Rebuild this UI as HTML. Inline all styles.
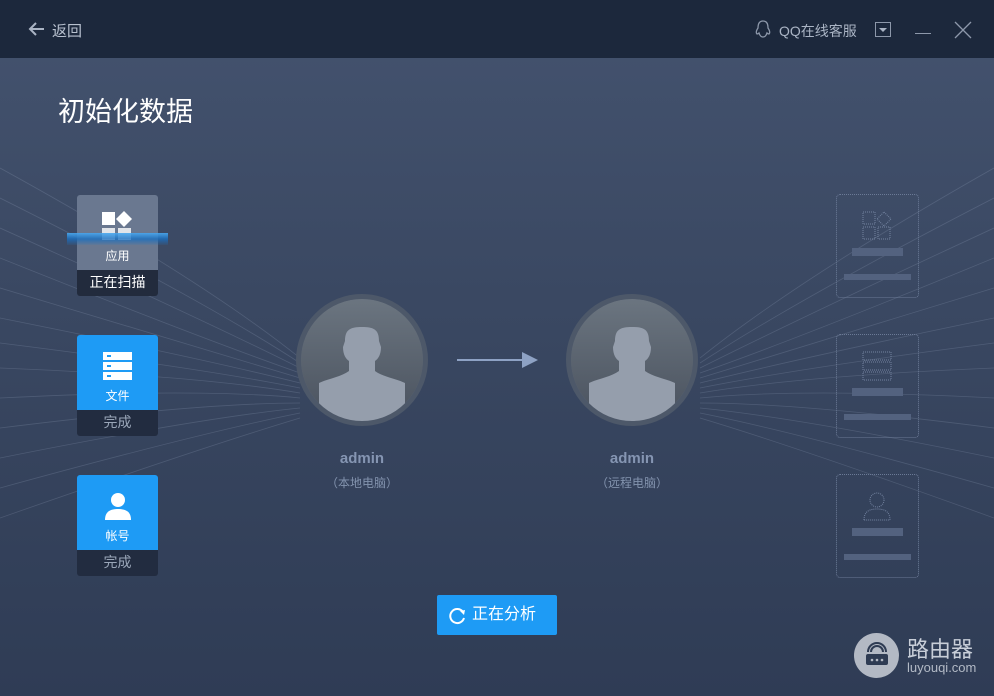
<!DOCTYPE html>
<html><head><meta charset="utf-8"><style>
*{margin:0;padding:0;box-sizing:border-box}
body{width:994px;height:696px;overflow:hidden;font-family:"Liberation Sans","Noto Sans CJK SC",sans-serif;position:relative;background:linear-gradient(#44536f 0,#3a4862 300px,#2f3c55 696px)}
.hdr{position:absolute;left:0;top:0;width:994px;height:58px;background:#1c283c}
.a{position:absolute}
.card{position:absolute;left:77px;width:81px;height:101px;border-radius:3px;overflow:hidden}
.card .top{height:75px;background:#1e9bf5;position:relative}
.card .bot{height:26px;background:#222c40;color:#9aa6b8;font-size:14px;text-align:center;line-height:24px}
.card .lbl{position:absolute;left:0;right:0;top:52px;text-align:center;color:#fff;font-size:12px}
.dc{position:absolute;left:836px;width:83px;height:104px;border:1px dotted #6b7a96;border-radius:4px}
.dc .b1{position:absolute;left:15px;top:53px;width:51px;height:8px;background:#53627f}
.dc .b2{position:absolute;left:7px;top:79px;width:67px;height:6px;background:#53627f}
.av{position:absolute;width:132px;height:132px;border-radius:50%;background:#5b6574;border:5px solid #4d5869;overflow:hidden}
.av .in{position:absolute;inset:0;border-radius:50%;background:linear-gradient(#6b7580,#4a525e)}
.nm{position:absolute;width:130px;text-align:center;color:#8595b2;font-size:15px;font-weight:bold}
.sb{position:absolute;width:130px;text-align:center;color:#8393ae;font-size:12px}
</style></head><body>
<svg class="a" style="left:0;top:58px" width="994" height="638">
<g stroke="#a8b6cf" stroke-width="0.8" opacity="0.2" fill="none">
<path d="M0 110 Q200 220 300 300"/><path d="M0 140 Q200 240 300 305"/><path d="M0 170 Q200 260 300 310"/><path d="M0 200 Q200 280 300 315"/><path d="M0 230 Q200 290 300 320"/><path d="M0 260 Q200 300 300 325"/><path d="M0 285 Q200 310 300 330"/><path d="M0 310 Q200 318 300 335"/><path d="M0 340 Q200 330 300 340"/><path d="M0 370 Q200 345 300 345"/><path d="M0 400 Q200 360 300 350"/><path d="M0 430 Q200 375 300 355"/><path d="M0 460 Q200 390 300 360"/>
<path d="M994 110 Q800 220 700 300"/><path d="M994 140 Q800 240 700 305"/><path d="M994 170 Q800 260 700 310"/><path d="M994 200 Q800 280 700 315"/><path d="M994 230 Q800 290 700 320"/><path d="M994 260 Q800 300 700 325"/><path d="M994 285 Q800 310 700 330"/><path d="M994 310 Q800 318 700 335"/><path d="M994 340 Q800 330 700 340"/><path d="M994 370 Q800 345 700 345"/><path d="M994 400 Q800 360 700 350"/><path d="M994 430 Q800 375 700 355"/><path d="M994 460 Q800 390 700 360"/>
</g></svg>
<div class="hdr"></div>
<svg class="a" style="left:28px;top:21px" width="18" height="16"><path d="M8 2 L2 8 L8 14 M2 8 H16" stroke="#aab4c4" stroke-width="2" fill="none"/></svg>
<div class="a" style="left:52px;top:20px;color:#b8c1cf;font-size:15px">返回</div>
<svg class="a" style="left:753px;top:19px" width="20" height="20"><path d="M10 2 C5 2 5 7 5 9 C3 12 3 14 4 15 C5 15 6 14 6 14 C7 17 8 18 10 18 C12 18 13 17 14 14 C14 14 15 15 16 15 C17 14 17 12 15 9 C15 7 15 2 10 2Z" stroke="#8d98aa" stroke-width="1.3" fill="none"/></svg>
<div class="a" style="left:779px;top:21px;color:#aab4c4;font-size:14px">QQ在线客服</div>
<div class="a" style="left:875px;top:22px;width:16px;height:15px;border:1px solid #8d98aa"></div>
<div class="a" style="left:879px;top:28px;width:0;height:0;border-left:4px solid transparent;border-right:4px solid transparent;border-top:4px solid #aab4c4"></div>
<div class="a" style="left:915px;top:33px;width:16px;height:1px;background:#8d98aa"></div>
<svg class="a" style="left:954px;top:21px" width="18" height="18"><path d="M1 1 L17 17 M17 1 L1 17" stroke="#8d98aa" stroke-width="1.3"/></svg>
<div class="a" style="left:58px;top:90px;color:#fff;font-size:27px">初始化数据</div>

<div class="card" style="top:195px"><div class="top" style="background:#6a7890">
<svg class="a" style="left:24px;top:16px" width="32" height="30"><rect x="1" y="1" width="13" height="13" fill="#fff"/><path d="M23 0 L31 8 L23 16 L15 8Z" fill="#fff"/><rect x="1" y="17" width="13" height="12" fill="#fff" opacity=".8"/><rect x="17" y="17" width="13" height="12" fill="#fff" opacity=".8"/></svg>
<div class="lbl">应用</div></div><div class="bot" style="color:#fff;background:#222b3d">正在扫描</div></div>
<div class="a" style="left:67px;top:233px;width:101px;height:12px;background:linear-gradient(rgba(73,168,240,.9),rgba(26,111,192,.8) 50%,rgba(30,120,200,0.1))"></div>

<div class="card" style="top:335px"><div class="top">
<svg class="a" style="left:26px;top:17px" width="29" height="29"><rect x="0" y="0" width="29" height="8" fill="#fff"/><rect x="0" y="10" width="29" height="8" fill="#fff"/><rect x="0" y="20" width="29" height="8" fill="#fff"/><rect x="4" y="3" width="4" height="2" fill="#1e9bf5"/><rect x="4" y="13" width="4" height="2" fill="#1e9bf5"/><rect x="4" y="23" width="4" height="2" fill="#1e9bf5"/></svg>
<div class="lbl">文件</div></div><div class="bot">完成</div></div>
<div class="card" style="top:475px"><div class="top">
<svg class="a" style="left:26px;top:16px" width="30" height="30"><circle cx="15" cy="9" r="7" fill="#fff"/><path d="M2 29 C2 20 8 18 15 18 C22 18 28 20 28 29Z" fill="#fff"/></svg>
<div class="lbl">帐号</div></div><div class="bot">完成</div></div>

<div class="dc" style="top:194px"><svg class="a" style="left:25px;top:16px" width="32" height="30"><g stroke="#7383a0" stroke-dasharray="1 1" fill="none"><rect x="1" y="1" width="12" height="12"/><path d="M22 1 L29 8 L22 15 L15 8Z"/><rect x="1" y="16" width="12" height="12"/><rect x="16" y="16" width="12" height="12"/></g></svg><div class="b1"></div><div class="b2"></div></div>
<div class="dc" style="top:334px"><svg class="a" style="left:25px;top:16px" width="32" height="30"><g stroke="#7383a0" stroke-dasharray="1 1" fill="none"><rect x="1" y="1" width="28" height="8"/><rect x="1" y="11" width="28" height="8"/><rect x="1" y="21" width="28" height="8"/></g></svg><div class="b1"></div><div class="b2"></div></div>
<div class="dc" style="top:474px"><svg class="a" style="left:25px;top:16px" width="32" height="30"><g stroke="#7383a0" stroke-dasharray="1 1" fill="none"><circle cx="15" cy="9" r="7"/><path d="M2 29 C2 20 8 18 15 18 C22 18 28 20 28 29Z"/></g></svg><div class="b1"></div><div class="b2"></div></div>

<div class="av" style="left:296px;top:294px"><div class="in"></div><svg class="a" style="left:0;top:0" width="122" height="122"><path d="M44 42 C44 30 50 28 61 28 C72 28 78 30 78 42 L80 48 C80 56 77 60 74 62 L74 72 C82 78 96 80 104 84 L104 122 L18 122 L18 84 C26 80 40 78 48 72 L48 62 C45 60 42 56 42 48Z" fill="#959eac"/></svg></div>
<div class="av" style="left:566px;top:294px"><div class="in"></div><svg class="a" style="left:0;top:0" width="122" height="122"><path d="M44 42 C44 30 50 28 61 28 C72 28 78 30 78 42 L80 48 C80 56 77 60 74 62 L74 72 C82 78 96 80 104 84 L104 122 L18 122 L18 84 C26 80 40 78 48 72 L48 62 C45 60 42 56 42 48Z" fill="#959eac"/></svg></div>
<svg class="a" style="left:456px;top:350px" width="84" height="20"><path d="M1 10 H68" stroke="#8ea2c4" stroke-width="2"/><path d="M66 2 L82 10 L66 18Z" fill="#8ea2c4"/></svg>
<div class="nm" style="left:297px;top:450px">admin</div><div class="sb" style="left:297px;top:474px">（本地电脑）</div>
<div class="nm" style="left:567px;top:450px">admin</div><div class="sb" style="left:567px;top:474px">（远程电脑）</div>
<div class="a" style="left:437px;top:595px;width:120px;height:40px;background:#1e9bf5;border-radius:2px;color:#fff;font-size:16px;line-height:40px;padding-left:35px">正在分析</div>
<svg class="a" style="left:449px;top:607px" width="18" height="18"><path d="M14 5 A7 7 0 1 0 15 11" stroke="#fff" stroke-width="2" fill="none"/><path d="M11 4 L16 3 L15 8Z" fill="#fff"/></svg>

<div class="a" style="left:854px;top:633px;width:45px;height:45px;border-radius:50%;background:#b3b9c4"></div>
<svg class="a" style="left:862px;top:640px" width="30" height="30"><path d="M9 12 A6 6 0 0 1 21 12 M6 12 A9 9 0 0 1 24 12" stroke="#2e3b53" stroke-width="2" fill="none"/><rect x="4" y="14" width="22" height="11" rx="2" fill="#2e3b53"/><circle cx="10" cy="20" r="1.3" fill="#b3b9c4"/><circle cx="15" cy="20" r="1.3" fill="#b3b9c4"/><circle cx="20" cy="20" r="1.3" fill="#b3b9c4"/></svg>
<div class="a" style="left:907px;top:632px;color:#c8ced8;font-size:22px">路由器</div>
<div class="a" style="left:907px;top:660px;color:#b3bac6;font-size:13px">luyouqi.com</div>
</body></html>
